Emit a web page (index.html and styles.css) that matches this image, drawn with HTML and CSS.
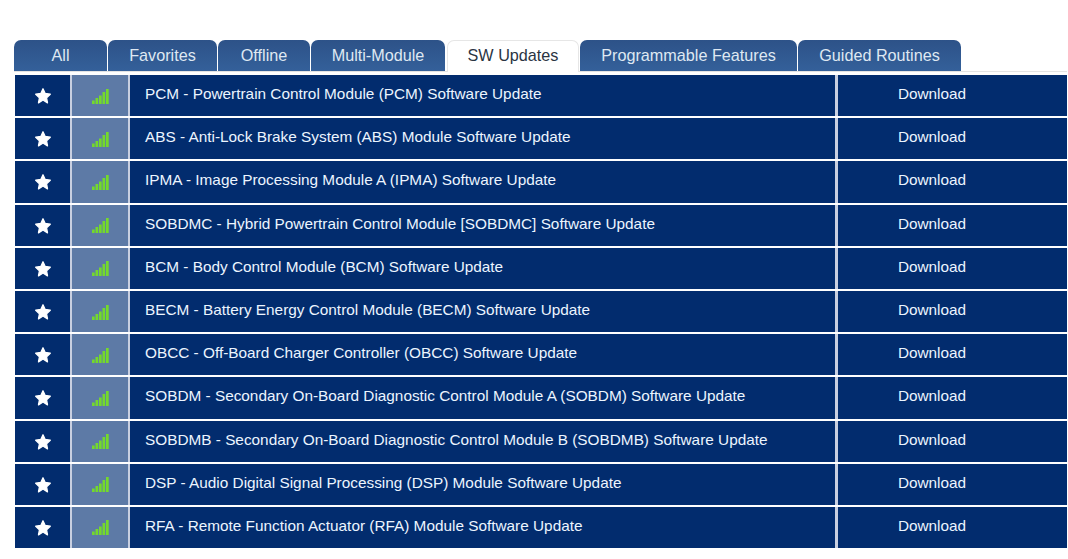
FILE: index.html
```html
<!DOCTYPE html>
<html lang="en">
<head>
    <meta charset="UTF-8">
    <title>SW Updates</title>
    <link rel="stylesheet" href="styles.css">
</head>
<body>
    <svg class="icon-defs" width="0" height="0">
        <symbol id="star" viewBox="0 0 18 18">
            <path d="M9 1.8l2.2 4.7 5.1.7-3.7 3.6.9 5.1L9 13l-4.5 2.9.9-5.1-3.7-3.6 5.1-.7z" stroke-width="1.3" stroke-linejoin="round"/>
        </symbol>
        <symbol id="signal" viewBox="0 0 17 15">
            <rect x="0" y="11.5" width="2.7" height="3.5"/>
            <rect x="3.5" y="9" width="2.7" height="6"/>
            <rect x="7" y="6.5" width="2.7" height="8.5"/>
            <rect x="10.5" y="3" width="2.7" height="12"/>
            <rect x="14" y="0" width="2.7" height="15"/>
        </symbol>
    </svg>

    <nav class="tabs">
        <a class="tab tab-all">All</a>
        <a class="tab tab-fav">Favorites</a>
        <a class="tab tab-off">Offline</a>
        <a class="tab tab-multi">Multi-Module</a>
        <a class="tab tab-sw active">SW Updates</a>
        <a class="tab tab-prog">Programmable Features</a>
        <a class="tab tab-guided">Guided Routines</a>
    </nav>

    <div class="list">
        <div class="row">
            <div class="cell cell-star"><svg class="star"><use href="#star"/></svg></div>
            <div class="cell cell-signal"><svg class="signal"><use href="#signal"/></svg></div>
            <div class="cell cell-name">PCM - Powertrain Control Module (PCM) Software Update</div>
            <div class="cell cell-action">Download</div>
        </div>
        <div class="row">
            <div class="cell cell-star"><svg class="star"><use href="#star"/></svg></div>
            <div class="cell cell-signal"><svg class="signal"><use href="#signal"/></svg></div>
            <div class="cell cell-name">ABS - Anti-Lock Brake System (ABS) Module Software Update</div>
            <div class="cell cell-action">Download</div>
        </div>
        <div class="row">
            <div class="cell cell-star"><svg class="star"><use href="#star"/></svg></div>
            <div class="cell cell-signal"><svg class="signal"><use href="#signal"/></svg></div>
            <div class="cell cell-name">IPMA - Image Processing Module A (IPMA) Software Update</div>
            <div class="cell cell-action">Download</div>
        </div>
        <div class="row">
            <div class="cell cell-star"><svg class="star"><use href="#star"/></svg></div>
            <div class="cell cell-signal"><svg class="signal"><use href="#signal"/></svg></div>
            <div class="cell cell-name">SOBDMC - Hybrid Powertrain Control Module [SOBDMC] Software Update</div>
            <div class="cell cell-action">Download</div>
        </div>
        <div class="row">
            <div class="cell cell-star"><svg class="star"><use href="#star"/></svg></div>
            <div class="cell cell-signal"><svg class="signal"><use href="#signal"/></svg></div>
            <div class="cell cell-name">BCM - Body Control Module (BCM) Software Update</div>
            <div class="cell cell-action">Download</div>
        </div>
        <div class="row">
            <div class="cell cell-star"><svg class="star"><use href="#star"/></svg></div>
            <div class="cell cell-signal"><svg class="signal"><use href="#signal"/></svg></div>
            <div class="cell cell-name">BECM - Battery Energy Control Module (BECM) Software Update</div>
            <div class="cell cell-action">Download</div>
        </div>
        <div class="row">
            <div class="cell cell-star"><svg class="star"><use href="#star"/></svg></div>
            <div class="cell cell-signal"><svg class="signal"><use href="#signal"/></svg></div>
            <div class="cell cell-name">OBCC - Off-Board Charger Controller (OBCC) Software Update</div>
            <div class="cell cell-action">Download</div>
        </div>
        <div class="row">
            <div class="cell cell-star"><svg class="star"><use href="#star"/></svg></div>
            <div class="cell cell-signal"><svg class="signal"><use href="#signal"/></svg></div>
            <div class="cell cell-name">SOBDM - Secondary On-Board Diagnostic Control Module A (SOBDM) Software Update</div>
            <div class="cell cell-action">Download</div>
        </div>
        <div class="row">
            <div class="cell cell-star"><svg class="star"><use href="#star"/></svg></div>
            <div class="cell cell-signal"><svg class="signal"><use href="#signal"/></svg></div>
            <div class="cell cell-name">SOBDMB - Secondary On-Board Diagnostic Control Module B (SOBDMB) Software Update</div>
            <div class="cell cell-action">Download</div>
        </div>
        <div class="row">
            <div class="cell cell-star"><svg class="star"><use href="#star"/></svg></div>
            <div class="cell cell-signal"><svg class="signal"><use href="#signal"/></svg></div>
            <div class="cell cell-name">DSP - Audio Digital Signal Processing (DSP) Module Software Update</div>
            <div class="cell cell-action">Download</div>
        </div>
        <div class="row">
            <div class="cell cell-star"><svg class="star"><use href="#star"/></svg></div>
            <div class="cell cell-signal"><svg class="signal"><use href="#signal"/></svg></div>
            <div class="cell cell-name">RFA - Remote Function Actuator (RFA) Module Software Update</div>
            <div class="cell cell-action">Download</div>
        </div>
    </div>
</body>
</html>
```

FILE: styles.css
```css
* {
    box-sizing: border-box;
}

body {
    margin: 0;
    padding: 40px 1px 0 14px;
    background: #ffffff;
    font-family: "Liberation Sans", Arial, sans-serif;
    font-size: 15.35px;
    overflow: hidden;
}

.icon-defs {
    display: block;
}

/* tab strip */
.tabs {
    display: flex;
    height: 32px;
    border-bottom: 1px solid #e4e4e4;
    font-size: 16.2px;
}

.tab {
    height: 31px;
    line-height: 31px;
    margin-right: 1px;
    text-align: center;
    color: #dfe8f2;
    background: linear-gradient(#2d5288, #34609a);
    border-radius: 7px 7px 0 0;
}

.tab-all { width: 93px; }
.tab-fav { width: 109px; }
.tab-off { width: 92px; }
.tab-multi { width: 134px; margin-right: 2px; }
.tab-sw { width: 132px; }
.tab-prog { width: 217px; }
.tab-guided { width: 163px; }

.tab.active {
    height: 32px;
    color: #2a3442;
    background: #ffffff;
    border: 1px solid #e6e6e6;
    border-bottom: 0;
    line-height: 29px;
}

/* rows */
.list {
    display: flex;
    flex-direction: column;
    gap: 2px;
    margin-top: 3px;
    padding-left: 1px;
}

.row {
    display: flex;
    gap: 2px;
    height: 41.2px;
    color: #ecf5ff;
    background: #c8cfe0;
}

.cell {
    display: flex;
    align-items: center;
    background: #022c6e;
}

.cell-star {
    width: 55px;
    justify-content: center;
    padding-top: 1px;
}

.cell-signal {
    width: 56px;
    justify-content: center;
    padding-left: 1px;
    padding-top: 1px;
    background: #5d7aa6;
}

.cell-name {
    width: 705px;
    padding: 0 0 3px 15px;
    white-space: nowrap;
}

.cell-action {
    flex: 1;
    margin-left: 1px;
    padding: 0 41px 3px 0;
    justify-content: center;
}

.star {
    width: 18px;
    height: 18px;
    fill: #ffffff;
    stroke: #ffffff;
}

.signal {
    width: 17px;
    height: 15px;
    fill: #74d92c;
}
```
